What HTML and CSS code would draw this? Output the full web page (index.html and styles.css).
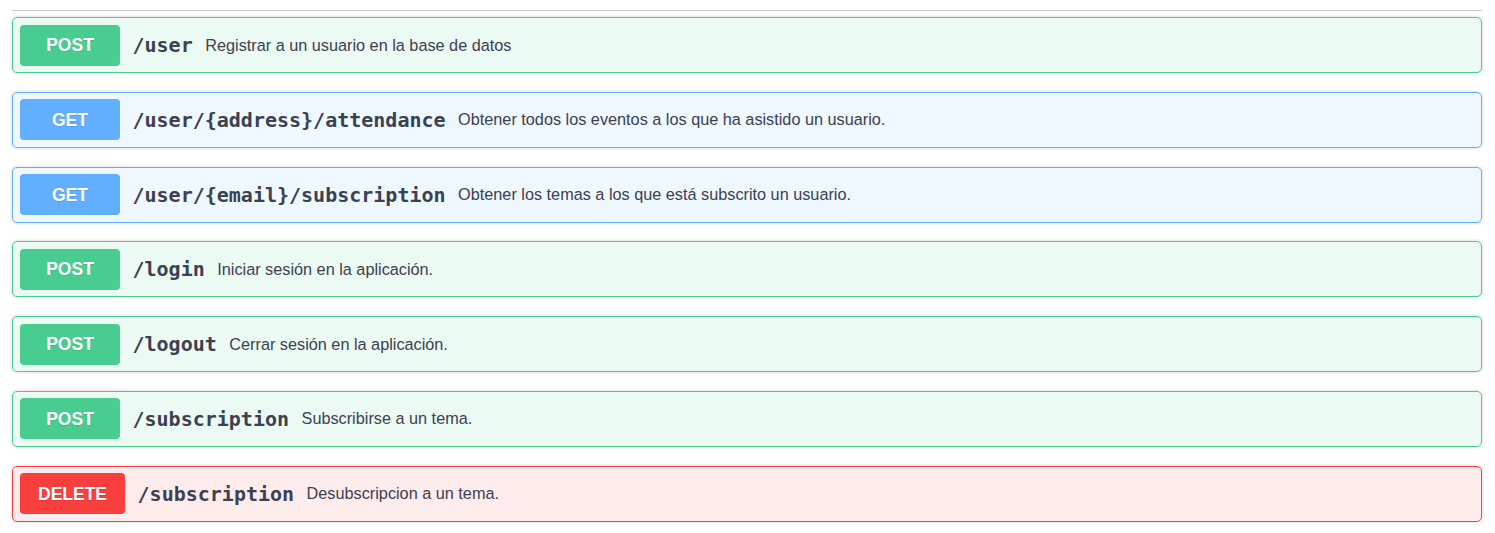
FILE: index.html
```html
<!DOCTYPE html>
<html lang="es">
<head>
<meta charset="utf-8">
<title>API</title>
<link rel="stylesheet" href="styles.css">
</head>
<body>
<div class="wrapper">
  <div class="opblocks">
    <div class="opblock post">
      <span class="method">POST</span>
      <span class="path">/user</span>
      <span class="desc">Registrar a un usuario en la base de datos</span>
    </div>
    <div class="opblock get">
      <span class="method">GET</span>
      <span class="path">/user/{address}/attendance</span>
      <span class="desc">Obtener todos los eventos a los que ha asistido un usuario.</span>
    </div>
    <div class="opblock get">
      <span class="method">GET</span>
      <span class="path">/user/{email}/subscription</span>
      <span class="desc">Obtener los temas a los que está subscrito un usuario.</span>
    </div>
    <div class="opblock post">
      <span class="method">POST</span>
      <span class="path">/login</span>
      <span class="desc">Iniciar sesión en la aplicación.</span>
    </div>
    <div class="opblock post">
      <span class="method">POST</span>
      <span class="path">/logout</span>
      <span class="desc">Cerrar sesión en la aplicación.</span>
    </div>
    <div class="opblock post">
      <span class="method">POST</span>
      <span class="path">/subscription</span>
      <span class="desc">Subscribirse a un tema.</span>
    </div>
    <div class="opblock delete">
      <span class="method">DELETE</span>
      <span class="path">/subscription</span>
      <span class="desc">Desubscripcion a un tema.</span>
    </div>
  </div>
</div>
</body>
</html>
```

FILE: styles.css
```css
html, body {
  margin: 0;
  padding: 0;
  background: #ffffff;
}

body {
  font-family: "Liberation Sans", Arial, sans-serif;
  color: #3b4151;
}

.wrapper {
  padding: 10px 13px 0 12px;
}

.opblocks {
  border-top: 1px solid #c6c8cc;
  padding-top: 6px;
}

.opblock {
  display: flex;
  align-items: center;
  height: 56px;
  box-sizing: border-box;
  padding: 0 7px;
  border: 1px solid;
  border-radius: 5px;
  margin-bottom: 18.75px;
  box-shadow: 0 0 3.75px rgba(0, 0, 0, 0.19);
}

.opblock.post {
  background: rgba(73, 204, 144, 0.1);
  border-color: #49cc90;
}

.opblock.get {
  background: rgba(97, 175, 254, 0.1);
  border-color: #61affe;
}

.opblock.delete {
  background: rgba(249, 62, 62, 0.1);
  border-color: #f93e3e;
}

.method {
  display: flex;
  align-items: center;
  justify-content: center;
  box-sizing: border-box;
  min-width: 100px;
  height: 41px;
  padding: 1px 18px 0;
  border-radius: 4px;
  font-size: 17.5px;
  font-weight: 700;
  color: #fff;
  text-shadow: 0 1px 0 rgba(0, 0, 0, 0.1);
  flex-shrink: 0;
}

.post .method { background: #49cc90; }
.get .method { background: #61affe; }
.delete .method { background: #f93e3e; }

.path {
  font-family: "DejaVu Sans Mono", monospace;
  font-weight: 700;
  font-size: 20px;
  padding: 0 12.5px;
  color: #3b4151;
}

.desc {
  font-size: 16.25px;
  color: #3b4151;
}
```
